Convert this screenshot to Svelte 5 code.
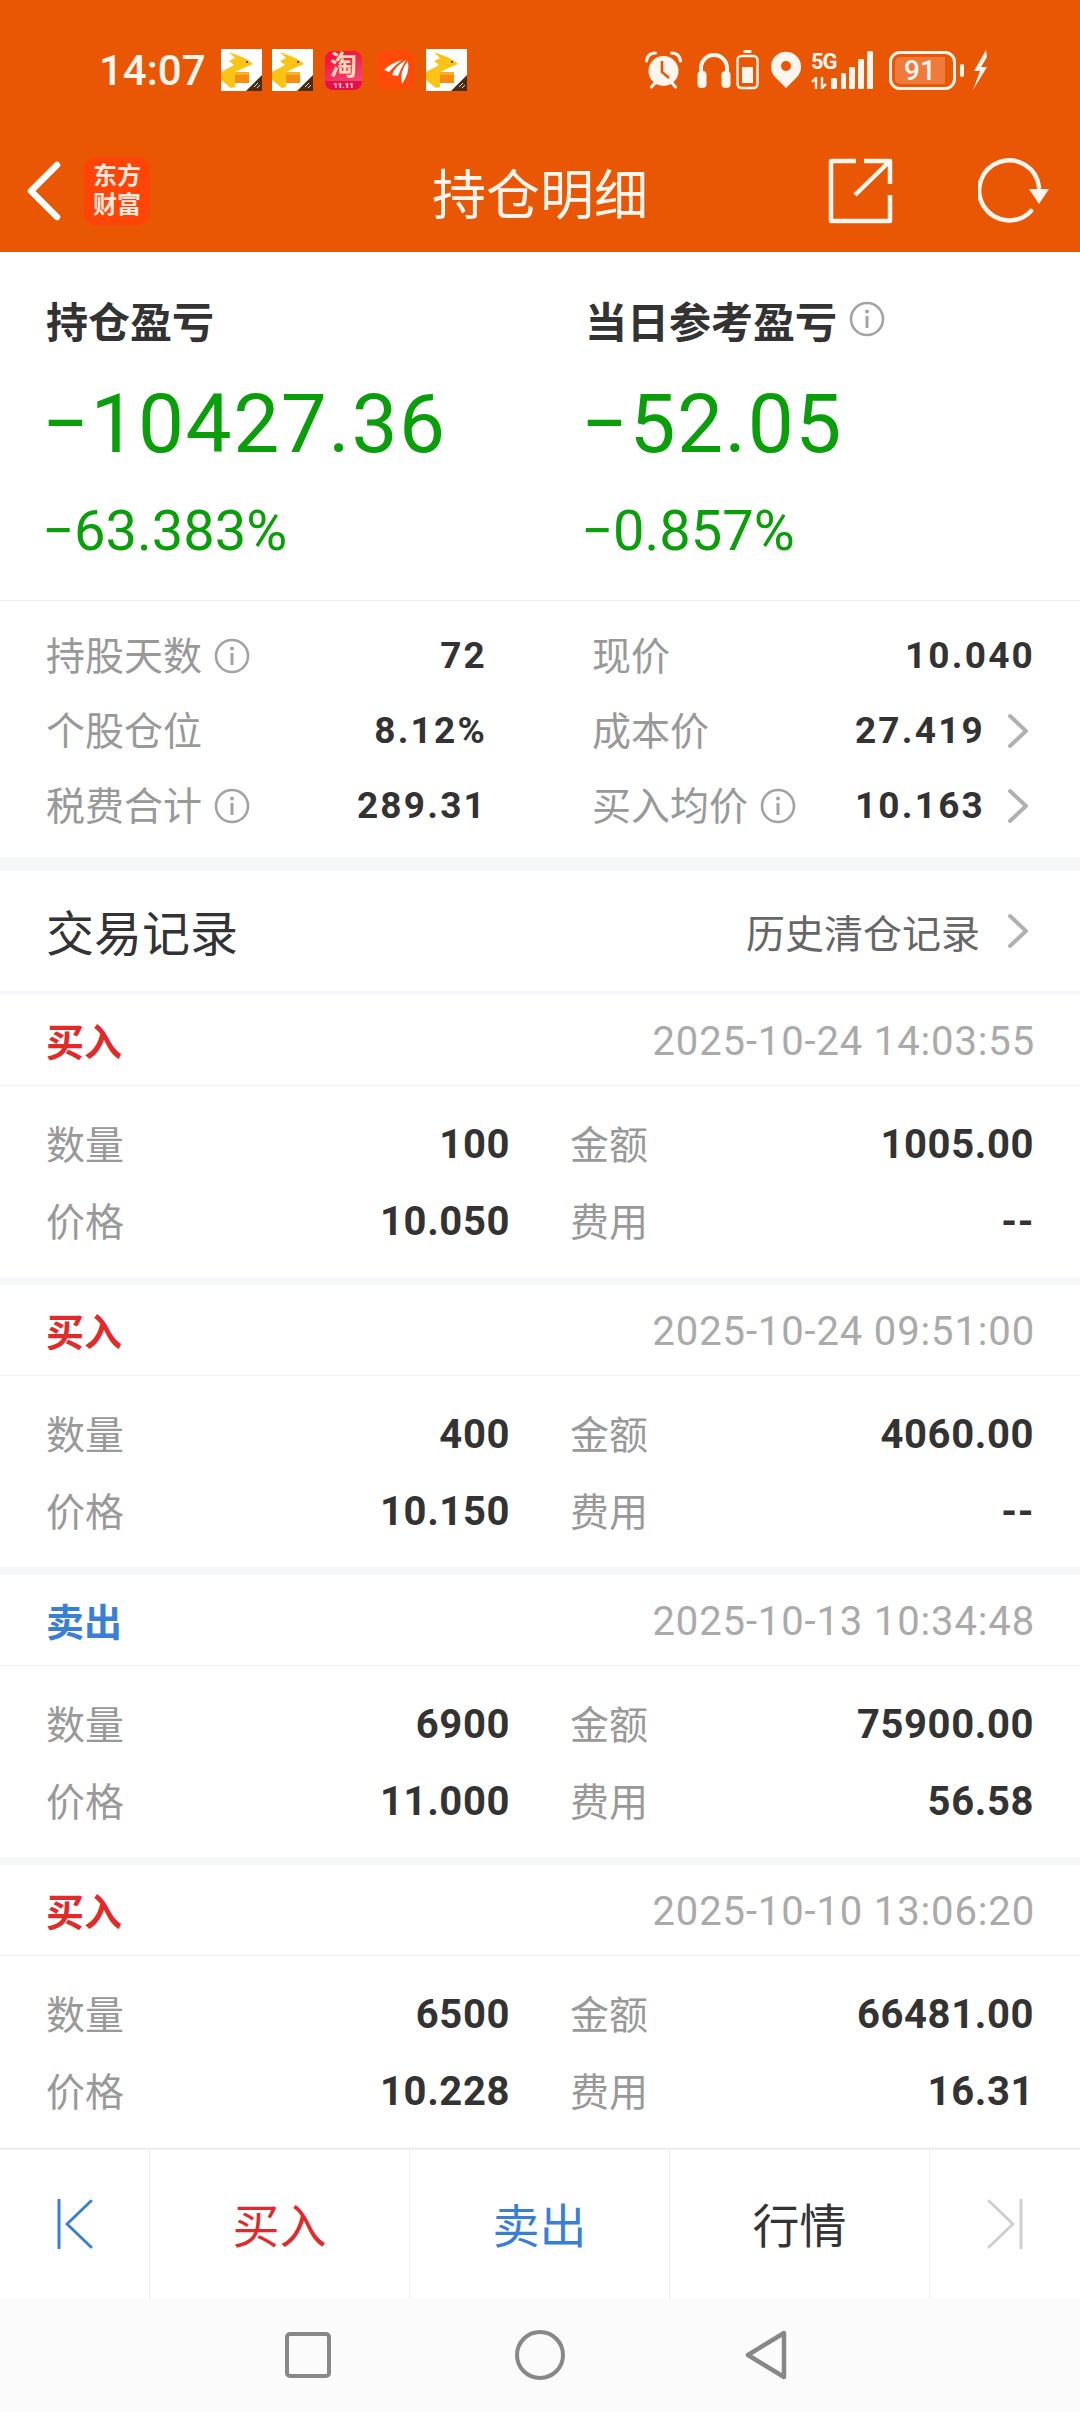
<script>
  const leftStats = [
    { label: '持股天数', info: true, value: '72' },
    { label: '个股仓位', value: '8.12%' },
    { label: '税费合计', info: true, value: '289.31' }
  ];
  const rightStats = [
    { label: '现价', value: '10.040' },
    { label: '成本价', value: '27.419', arrow: true },
    { label: '买入均价', info: true, value: '10.163', arrow: true }
  ];
  const records = [
    { type: '买入', time: '2025-10-24 14:03:55', qty: '100', amount: '1005.00', price: '10.050', fee: '--' },
    { type: '买入', time: '2025-10-24 09:51:00', qty: '400', amount: '4060.00', price: '10.150', fee: '--' },
    { type: '卖出', time: '2025-10-13 10:34:48', qty: '6900', amount: '75900.00', price: '11.000', fee: '56.58' },
    { type: '买入', time: '2025-10-10 13:06:20', qty: '6500', amount: '66481.00', price: '10.228', fee: '16.31' }
  ];
</script>

{#snippet info()}
  <svg class="info" viewBox="0 0 36 36" width="36" height="36">
    <circle cx="18" cy="18" r="16" fill="none" stroke="#a3a3a3" stroke-width="2.6" />
    <circle cx="18" cy="10.5" r="2" fill="#a3a3a3" />
    <rect x="16.5" y="15" width="3" height="12" fill="#a3a3a3" />
  </svg>
{/snippet}

{#snippet arrow()}
  <svg class="arrow" viewBox="0 0 22 36" width="22" height="36">
    <path d="M3 3 L19 18 L3 33" fill="none" stroke="#b0b0b0" stroke-width="4" stroke-linecap="round" stroke-linejoin="round" />
  </svg>
{/snippet}

{#snippet roo()}
  <svg class="note" viewBox="0 0 41 42" width="41" height="42">
    <rect width="41" height="42" fill="#fff" />
    <path d="M8 3 L21 8 L27 11 L32 15 L25 18 L14 23 V38 L10 39 L0 31 V23 L13 16 L8 12 L14 9 Z" fill="#fbc414" />
    <circle cx="26" cy="13" r="1" fill="#222" />
    <rect x="14" y="23" width="14" height="11" fill="#f98d12" />
    <rect x="14" y="23" width="14" height="3" fill="#fdb01f" />
    <path d="M41 26 V42 H25 Z" fill="#4a2c10" />
    <path d="M33 38 L37 34 M36 39 L39 36" stroke="#ddd" stroke-width="1" />
  </svg>
{/snippet}

<div class="page">
  <header class="top">
    <div class="status">
      <div class="status-left">
        <span class="time">14:07</span>
        {@render roo()}
        {@render roo()}
        <span class="taobao"><span class="tao">淘</span><span class="eleven">11.11</span></span>
        <svg class="note mail" viewBox="0 0 37 38" width="37" height="38">
          <rect width="37" height="38" rx="9" fill="#ff4a0a" />
          <path d="M7 19 Q14 12 25 9 Q17 15 12 21 Z M15 24 Q18 15 29 9 Q24 17 21 25 Z M25 33 Q22 20 31 10 Q33 22 25 33 Z" fill="#fff" />
        </svg>
        {@render roo()}
      </div>
      <div class="status-right">
        <svg viewBox="0 0 37 38" width="37" height="38">
          <circle cx="18.5" cy="20" r="15" fill="#fff5ef" />
          <path d="M1.5 10 Q2.500 2 10.500 2 M35.500 10 Q34.500 2 26.500 2 M6.500 36 L10 32 M30.500 36 L27 32" fill="none" stroke="#fff5ef" stroke-width="3" stroke-linecap="round" />
          <path d="M17 10 V21 L24 27" fill="none" stroke="#e95704" stroke-width="2.6" />
        </svg>
        <svg class="head" viewBox="0 0 34 38" width="34" height="38">
          <path d="M4 26 V17 A13 13 0 0 1 30 17 V26" fill="none" stroke="#fff5ef" stroke-width="4" />
          <rect x="0.500" y="20" width="9" height="17" rx="4" fill="#fff5ef" />
          <rect x="24.500" y="20" width="9" height="17" rx="4" fill="#fff5ef" />
        </svg>
        <svg class="small-batt" viewBox="0 0 23 40" width="23" height="40">
          <rect x="7.500" y="0" width="8" height="3" rx="1" fill="#fff5ef" />
          <rect x="1.500" y="6" width="20" height="32" rx="4" fill="none" stroke="#fff5ef" stroke-width="2.400" />
          <rect x="6" y="17" width="11" height="16" fill="#fff5ef" />
        </svg>
        <svg class="pin" viewBox="0 0 30 38" width="30" height="38">
          <path d="M15 37 L4 26 A15 15 0 1 1 26 26 Z" fill="#fff5ef" />
          <circle cx="15" cy="15" r="5" fill="#e95704" />
        </svg>
        <span class="net">
          <span class="fiveg">5G</span>
          <svg viewBox="0 0 26 12" width="26" height="12">
            <path d="M5 0 V12 M1 5 L5 1 M11 12 V0 M11 11 L15 7" fill="none" stroke="#fff5ef" stroke-width="2.400" />
            <rect x="20" y="1" width="6" height="11" rx="1.500" fill="#fff5ef" />
          </svg>
        </span>
        <svg class="signal" viewBox="0 0 32 38" width="32" height="38">
          <rect x="0" y="22" width="5" height="16" rx="1.500" fill="#fff5ef" />
          <rect x="8" y="16" width="6" height="22" rx="1.500" fill="#fff5ef" />
          <rect x="17" y="8" width="6" height="30" rx="1.500" fill="#fff5ef" />
          <rect x="26" y="0" width="6" height="38" rx="1.500" fill="#fff5ef" />
        </svg>
        <span class="battery"><span class="level">91</span></span>
        <span class="cap"></span>
        <svg class="bolt" viewBox="0 0 16 40" width="16" height="40">
          <path d="M14 0 L2 21 H8 L1 40 L15 17 H9 L15 7 Z" fill="#fff5ef" />
        </svg>
      </div>
    </div>
    <nav class="bar">
      <svg class="back" viewBox="0 0 36 60" width="36" height="60">
        <path d="M32 4 L6 30 L32 56" fill="none" stroke="#fff" stroke-width="6.500" stroke-linecap="round" stroke-linejoin="round" />
      </svg>
      <span class="logo"><span>东方</span><span>财富</span></span>
      <h1>持仓明细</h1>
      <svg class="share" viewBox="0 0 66 66" width="66" height="66">
        <path d="M28 3 H3 V63 H62 V37 M62 26 V3 H36 M62 3 L27 37" fill="none" stroke="#fff5ef" stroke-width="4.500" stroke-linejoin="round" />
      </svg>
      <svg class="refresh" viewBox="0 0 72 68" width="72" height="68">
        <path d="M53 54 A30 30 0 1 1 61 30" fill="none" stroke="#fff5ef" stroke-width="4.500" stroke-linecap="round" />
        <path d="M51 32 H71 L61 47 Z" fill="#fff5ef" />
      </svg>
    </nav>
  </header>

  <main class="content">
    <section class="summary">
      <div class="pl">
        <div class="pl-title">持仓盈亏</div>
        <div class="pl-big">−10427.36</div>
        <div class="pl-pct">−63.383%</div>
      </div>
      <div class="pl">
        <div class="pl-title">当日参考盈亏 {@render info()}</div>
        <div class="pl-big">−52.05</div>
        <div class="pl-pct">−0.857%</div>
      </div>
    </section>

    <section class="stats">
      <div class="stat-col left">
        {#each leftStats as s}
          <div class="stat">
            <span class="label">{s.label}{#if s.info}{@render info()}{/if}</span>
            <span class="num">{s.value}</span>
          </div>
        {/each}
      </div>
      <div class="stat-col right">
        {#each rightStats as s}
          <div class="stat">
            <span class="label">{s.label}{#if s.info}{@render info()}{/if}</span>
            <span class="num">{s.value}{#if s.arrow}{@render arrow()}{/if}</span>
          </div>
        {/each}
      </div>
    </section>

    <section class="records-head">
      <h2>交易记录</h2>
      <span class="history">历史清仓记录{@render arrow()}</span>
    </section>

    {#each records as r}
      <article class="record">
        <div class="rec-head">
          <span class="type" class:sell={r.type === '卖出'}>{r.type}</span>
          <span class="when">{r.time}</span>
        </div>
        <div class="rec-body">
          <div class="cell first"><span class="label">数量</span><span class="val">{r.qty}</span></div>
          <div class="cell"><span class="label">金额</span><span class="val">{r.amount}</span></div>
          <div class="cell first"><span class="label">价格</span><span class="val">{r.price}</span></div>
          <div class="cell"><span class="label">费用</span><span class="val">{r.fee}</span></div>
        </div>
      </article>
    {/each}
  </main>

  <footer>
    <div class="actions">
      <div class="act edge">
        <svg viewBox="0 0 36 50" width="36" height="50">
          <path d="M2 1 V49 M34 2 L10 25 L34 48" fill="none" stroke="#3a7fd6" stroke-width="3" stroke-linecap="round" stroke-linejoin="round" />
        </svg>
      </div>
      <div class="act buy">买入</div>
      <div class="act sell">卖出</div>
      <div class="act quote">行情</div>
      <div class="act edge">
        <svg viewBox="0 0 36 50" width="36" height="50">
          <path d="M34 1 V49 M2 2 L26 25 L2 48" fill="none" stroke="#cfcfcf" stroke-width="3" stroke-linecap="round" stroke-linejoin="round" />
        </svg>
      </div>
    </div>
    <div class="sysnav">
      <svg viewBox="0 0 46 46" width="46" height="46">
        <rect x="2" y="2" width="42" height="42" rx="3" fill="none" stroke="#888" stroke-width="4" />
      </svg>
      <svg viewBox="0 0 50 50" width="50" height="50">
        <circle cx="25" cy="25" r="23" fill="none" stroke="#888" stroke-width="4" />
      </svg>
      <svg viewBox="0 0 44 50" width="44" height="50">
        <path d="M40 3 V47 L4 25 Z" fill="none" stroke="#888" stroke-width="4.500" stroke-linejoin="round" />
      </svg>
    </div>
  </footer>
</div>

<style>
  :global(body) {
    margin: 0;
    background: #fff;
    font-family: Roboto, "Noto Sans CJK SC", sans-serif;
  }

  .page {
    width: 1080px;
    height: 2412px;
    display: flex;
    flex-direction: column;
    overflow: hidden;
  }

  .top {
    height: 252px;
    background: #e95704;
    color: #fff;
    flex: none;
  }

  .status {
    height: 130px;
    padding: 10px 92px 0 99px;
    box-sizing: border-box;
    display: flex;
    justify-content: space-between;
    align-items: center;
  }
  .status-left, .status-right {
    display: flex;
    align-items: center;
  }
  .time {
    font-size: 42px;
    font-weight: 500;
    color: #fff5ef;
    width: 122px;
  }
  .note { margin-right: 10px; display: block; }
  .mail { margin-left: 15px; margin-right: 12px; }
  .taobao {
    width: 37px;
    height: 39px;
    margin-left: 2px;
    border-radius: 8px;
    background: linear-gradient(160deg, #f5163f 20%, #f2568a);
    display: flex;
    flex-direction: column;
    align-items: center;
  }
  .tao {
    font-size: 27px;
    line-height: 30px;
    height: 30px;
    font-weight: 700;
    color: #ffdcb8;
  }
  .eleven {
    width: 100%;
    height: 9px;
    line-height: 9px;
    font-size: 8px;
    font-weight: 700;
    text-align: center;
    background: #e5104a;
    border-radius: 0 0 8px 8px;
    color: #fff;
  }
  .head { margin-left: 15px; }
  .small-batt { margin-left: 5px; }
  .pin { margin-left: 12px; }
  .net {
    margin-left: 10px;
    width: 26px;
    display: flex;
    flex-direction: column;
    align-items: flex-start;
    gap: 4px;
  }
  .fiveg {
    font-size: 22px;
    line-height: 22px;
    font-weight: 700;
    color: #fff5ef;
    letter-spacing: -1px;
  }
  .signal { margin-left: 4px; }
  .battery {
    margin-left: 16px;
    width: 67px;
    height: 39px;
    box-sizing: border-box;
    border: 3px solid #fff5ef;
    border-radius: 11px;
    padding: 3px;
    display: flex;
  }
  .level {
    width: 50px;
    background: #ee7a3c;
    border-radius: 5px 0 0 5px;
    color: #fff5ef;
    font-size: 28px;
    line-height: 27px;
    font-weight: 500;
    text-align: center;
  }
  .cap {
    width: 4px;
    height: 13px;
    margin-left: 4px;
    background: #fff5ef;
    border-radius: 2px;
  }
  .bolt { margin-left: 8px; }

  .bar {
    height: 122px;
    position: relative;
    display: flex;
    align-items: center;
    padding: 0 30px 0 25px;
  }
  .back { flex: none; }
  .logo {
    width: 66px;
    height: 68px;
    margin-left: 23px;
    border-radius: 12px;
    background: #ff4408;
    display: flex;
    flex-direction: column;
    justify-content: center;
    align-items: center;
    color: #ffe9de;
    font-size: 24px;
    line-height: 29px;
    font-weight: 700;
  }
  .bar h1 {
    position: absolute;
    left: 0;
    right: 0;
    margin: 0;
    text-align: center;
    font-size: 54px;
    font-weight: 400;
    color: #fff5ef;
    pointer-events: none;
  }
  .share { margin-left: auto; }
  .refresh { margin-left: 84px; }

  .content {
    flex: 1;
    overflow: hidden;
    background: #fff;
  }

  .summary {
    height: 349px;
    box-sizing: border-box;
    padding-top: 40px;
    display: grid;
    grid-template-columns: 540px 540px;
    border-bottom: 1px solid #f1f1f1;
  }
  .pl { padding-left: 46px; }
  .pl:nth-child(2) { padding-left: 45px; }
  .pl-title {
    height: 54px;
    display: flex;
    align-items: center;
    gap: 12px;
    font-size: 42px;
    font-weight: 700;
    color: #333;
  }
  .pl-big {
    margin: 31px 0 0 -4px;
    font-size: 82px;
    line-height: 94px;
    color: #0a9e0a;
    letter-spacing: 1.5px;
  }
  .pl-pct {
    margin: 30px 0 0 -4px;
    font-size: 56px;
    line-height: 60px;
    color: #0a9e0a;
  }

  .stats {
    height: 270px;
    box-sizing: border-box;
    padding: 17px 45px 0 46px;
    border-bottom: 14px solid #f6f7f9;
    display: grid;
    grid-template-columns: 441px 443px;
    column-gap: 105px;
  }
  .stat {
    height: 75px;
    display: flex;
    justify-content: space-between;
    align-items: center;
  }
  .label {
    display: inline-flex;
    align-items: center;
    gap: 12px;
    font-size: 39px;
    color: #999;
  }
  .stat .label { padding-bottom: 6px; }
  .stat .info { margin-top: 6px; }
  .num {
    display: inline-flex;
    align-items: center;
    font-size: 37px;
    font-weight: 700;
    color: #333;
    letter-spacing: 2.2px;
  }
  .arrow { margin-left: 22px; margin-right: 6px; flex: none; }

  .records-head {
    height: 124px;
    box-sizing: border-box;
    border-bottom: 4px solid #f6f7f9;
    padding: 0 45px 0 46px;
    display: flex;
    justify-content: space-between;
    align-items: center;
  }
  .records-head h2 {
    margin: 0;
    padding-bottom: 2px;
    font-size: 48px;
    font-weight: 400;
    color: #333;
  }
  .history {
    display: inline-flex;
    align-items: center;
    font-size: 39px;
    color: #666;
  }
  .history .arrow { margin-left: 27px; }

  .record { border-bottom: 8px solid #f6f7f9; }
  .rec-head {
    height: 90px;
    padding: 0 45px 0 46px;
    display: flex;
    justify-content: space-between;
    align-items: center;
    border-bottom: 1px solid #f2f2f2;
  }
  .type {
    padding-bottom: 2px;
    font-size: 38px;
    font-weight: 700;
    color: #e12b2b;
  }
  .type.sell { color: #3a7fd6; }
  .when {
    padding-top: 3px;
    font-size: 40px;
    color: #aaa;
    letter-spacing: 0.86px;
  }
  .rec-body {
    height: 191px;
    box-sizing: border-box;
    padding: 19px 45px 0 46px;
    display: grid;
    grid-template-columns: 464px 464px;
    grid-auto-rows: 77px;
    column-gap: 60px;
  }
  .cell {
    display: flex;
    justify-content: space-between;
    align-items: center;
  }
  .cell .label { padding-bottom: 3px; }
  .val {
    padding-top: 2px;
    font-size: 40px;
    font-weight: 700;
    color: #333;
    letter-spacing: 0.6px;
  }

  footer { flex: none; }
  .actions {
    height: 150px;
    box-sizing: border-box;
    border-top: 2px solid #eee;
    display: grid;
    grid-template-columns: 150px 260px 260px 260px 150px;
    background: #fff;
  }
  .act {
    display: flex;
    align-items: center;
    justify-content: center;
    font-size: 47px;
    padding-bottom: 4px;
    border-right: 1px solid #eee;
  }
  .act.edge { padding-bottom: 0; }
  .act:last-child { border-right: 0; }
  .buy { color: #e12b2b; }
  .sell { color: #3a7fd6; }
  .quote { color: #333; }

  .sysnav {
    height: 114px;
    box-sizing: border-box;
    padding-right: 7px;
    background: #fbfbfb;
    display: flex;
    align-items: center;
    justify-content: center;
  }
  .sysnav svg:nth-child(1) { margin-right: 184px; }
  .sysnav svg:nth-child(2) { margin-right: 179px; }
</style>
